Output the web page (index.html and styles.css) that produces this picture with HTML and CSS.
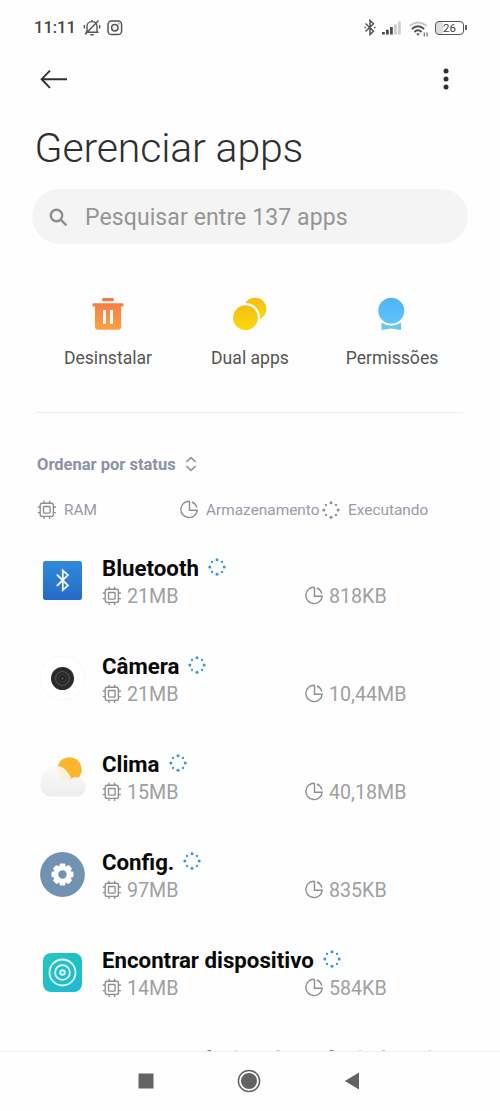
FILE: index.html
```html
<!DOCTYPE html>
<html lang="pt-BR">
<head>
<meta charset="utf-8">
<title>Gerenciar apps</title>
<link rel="stylesheet" href="styles.css">
</head>
<body>
<svg class="defs" width="0" height="0" aria-hidden="true">
  <defs>
    <symbol id="chip" viewBox="0 0 20 20"><g fill="none" stroke="currentColor" stroke-width="1.35"><rect x="3.2" y="3.2" width="13.2" height="13.2" rx="2"/><rect x="6.5" y="6.5" width="6.6" height="6.6" rx=".8"/><path d="M7 3V.8M12.600 3V.8M7 18.900V16.500M12.600 18.900V16.500M3 7H.8M3 12.600H.8M18.900 7H16.500M18.900 12.600H16.500"/></g></symbol>
    <symbol id="pie" viewBox="0 0 20 20"><g fill="none" stroke="currentColor" stroke-width="1.4"><path d="M10.500 1.200A8.200 8.200 0 1 0 18.200 10.200H10.500V1.200M13 2A8.200 8.200 0 0 1 17.800 7.600"/></g></symbol>
    <symbol id="run" viewBox="0 0 18 18"><g fill="currentColor"><circle cx="9" cy="1.8" r="1.5"/><circle cx="16.200" cy="9" r="1.5"/><circle cx="9" cy="16.200" r="1.5"/><circle cx="1.800" cy="9" r="1.5"/><circle cx="14" cy="4" r="1.150"/><circle cx="14" cy="14" r="1.150"/><circle cx="4" cy="14" r="1.150"/><circle cx="4" cy="4" r="1.150"/></g></symbol>
    <linearGradient id="orange" x2="0" y2="1"><stop stop-color="#f4764a"/><stop offset="1" stop-color="#fda13f"/></linearGradient>
    <linearGradient id="yellow" x2="0" y2="1"><stop stop-color="#f6bd12"/><stop offset="1" stop-color="#fbd90c"/></linearGradient>
    <linearGradient id="sky" x2="0" y2="1"><stop stop-color="#4eb5f5"/><stop offset="1" stop-color="#60c4fa"/></linearGradient>
    <linearGradient id="blue" x2="0" y2="1"><stop stop-color="#318ada"/><stop offset="1" stop-color="#246bc6"/></linearGradient>
    <linearGradient id="teal" x2="1" y2="1"><stop stop-color="#25c6bd"/><stop offset="1" stop-color="#1db9d6"/></linearGradient>
    <linearGradient id="cloud" x2="0" y2="1"><stop stop-color="#fafafa"/><stop offset="1" stop-color="#ededee"/></linearGradient>
  </defs>
</svg>
<div class="screen">
  <header class="status">
    <span class="clock">11:11</span>
    <svg class="bell" width="18" height="18" viewBox="0 0 18 18" fill="none" stroke="#555" stroke-width="1.4"><path d="M4 13V7.5C4 4.500 6 2.600 9 2.600S14 4.500 14 7.500V13M2.500 13.300H15.500M7.300 15.800H10.700M1.400 6V9.500M16.600 6V9.500M9 2.600V1M15.500 1.500L2 15.500"/></svg>
    <svg width="16" height="16" viewBox="0 0 16 16" fill="none" stroke="#555" stroke-width="1.5"><rect x="1" y="1" width="13.600" height="13.600" rx="3.600"/><circle cx="7.800" cy="7.800" r="3.200"/><path d="M11.300 3.800h1"/></svg>
    <span class="grow"></span>
    <svg class="bt" width="12" height="17" viewBox="0 0 12 17" fill="none" stroke="#555" stroke-width="1.500"><path d="M1.500 4.500L9.500 12.300 6 15.600V1.400L9.500 4.700 1.500 12.500M.5 8.500h1.600M10 8.500h1.600"/></svg>
    <svg class="signal" width="19" height="14" viewBox="0 0 19 14"><path d="M0 11h2.800v2.500H0zM4 8.800h2.800v4.700H4zM8 6h2.800v7.500H8z" fill="#4d4d4d"/><path d="M12 3.200h2.800v10.300H12zM16 .5h2.800v13H16z" fill="#cfcfcf"/></svg>
    <svg class="wifi" width="20" height="16" viewBox="0 0 20 16" fill="none" stroke-width="1.800"><path d="M.5 5Q9-2 17.500 5" stroke="#c8c8c8"/><path d="M2.800 8Q9 2.400 15.200 8M5.400 11Q9 7.400 12.600 11" stroke="#505050"/><path d="M7.200 12.500h3.600L9 14.700z" fill="#444"/><path d="M15.300 11.500v4M18 11.500v4" stroke="#777" stroke-width="1.300"/></svg>
    <span class="battery">26</span><i class="battery-tip"></i>
  </header>

  <nav class="toolbar">
    <svg width="28" height="20" viewBox="0 0 28 20" fill="none" stroke="#303030" stroke-width="1.900"><path d="M27 10.200H2M10 1.600L1.600 10.200 10 18.800"/></svg>
    <svg width="6" height="22" viewBox="0 0 6 22" fill="#303030"><circle cx="3" cy="3" r="2.500"/><circle cx="3" cy="11" r="2.500"/><circle cx="3" cy="19" r="2.500"/></svg>
  </nav>

  <h1 class="heading">Gerenciar apps</h1>
  <div class="search">
    <svg width="19" height="19" viewBox="0 0 19 19" fill="none" stroke="#8e8e8e" stroke-width="2.400"><circle cx="7.500" cy="7.500" r="5.700"/><path d="M11.700 11.700L17.400 17.400"/></svg>
    <span class="placeholder">Pesquisar entre 137 apps</span>
  </div>

  <section class="actions">
    <div class="action">
      <svg width="34" height="34" viewBox="0 0 34 34"><path fill="url(#orange)" fill-rule="evenodd" d="M12.500 1h9a1.300 1.300 0 0 1 0 3.200h-9a1.300 1.300 0 0 1 0-3.200zM2.500 6.200h29a1 1 0 0 1 1 1v1.200a1 1 0 0 1-1 1h-1.300v20.400a3 3 0 0 1-3 3H7a3 3 0 0 1-3-3V9.400H2.500a1 1 0 0 1-1-1V7.200a1 1 0 0 1 1-1zM12 13v13.700h3V13zM19 13v13.700h3V13z"/></svg>
      <span>Desinstalar</span>
    </div>
    <div class="action">
      <svg width="34" height="34" viewBox="0 0 34 34"><circle cx="22" cy="12" r="11.300" fill="url(#yellow)"/><circle cx="12.500" cy="20.500" r="14.600" fill="#fefefe"/><circle cx="12.500" cy="20.700" r="12.400" fill="url(#yellow)"/></svg>
      <span>Dual apps</span>
    </div>
    <div class="action">
      <svg width="34" height="34" viewBox="0 0 34 34"><path d="M6.500 25.500L16 28.500 26 25.500V33L16 31.500 6.500 33z" fill="#63cbe9"/><circle cx="16.300" cy="13.700" r="14.800" fill="#fefefe"/><circle cx="16.300" cy="13.700" r="13" fill="url(#sky)"/></svg>
      <span>Permissões</span>
    </div>
  </section>

  <div class="sort"><span>Ordenar por status</span><svg width="12" height="16" viewBox="0 0 12 16" fill="none" stroke="#9598aa" stroke-width="1.700"><path d="M1.300 5.800L6 1.600 10.700 5.800M1.300 10.200L6 14.400 10.700 10.200"/></svg></div>
  <div class="legend">
    <span class="key"><svg class="mini"><use href="#chip"/></svg>RAM</span>
    <span class="key"><svg class="mini"><use href="#pie"/></svg>Armazenamento</span>
    <span class="key"><svg class="mini dots"><use href="#run"/></svg>Executando</span>
  </div>

  <main class="apps">
    <article class="app">
      <svg class="logo" viewBox="0 0 46 46"><rect x="3" y="4" width="39" height="39" rx="2.500" fill="url(#blue)"/><path d="M16.800 17.500L28 28.500 22.800 33V13.500L28 18 16.800 29" fill="none" stroke="#eef8ff" stroke-width="1.800"/></svg>
      <div class="info"><h2 class="name">Bluetooth<svg class="running"><use href="#run"/></svg></h2><div class="usage"><span class="stat"><svg class="mini"><use href="#chip"/></svg>21MB</span><span class="stat"><svg class="mini"><use href="#pie"/></svg>818KB</span></div></div>
    </article>
    <article class="app">
      <svg class="logo" viewBox="0 0 46 46"><circle cx="22.500" cy="23" r="22" fill="#fff" stroke="#f7f7f7"/><circle cx="22.500" cy="23.500" r="11.500" fill="#292a2c"/><circle cx="22.500" cy="23.500" r="7" fill="none" stroke="#4d4d4f" stroke-width="1.200"/><circle cx="22.500" cy="23.500" r="3.700" fill="#202123" stroke="#3c3c3c"/><circle cx="22.500" cy="23.500" r=".9" fill="#666"/></svg>
      <div class="info"><h2 class="name">Câmera<svg class="running"><use href="#run"/></svg></h2><div class="usage"><span class="stat"><svg class="mini"><use href="#chip"/></svg>21MB</span><span class="stat"><svg class="mini"><use href="#pie"/></svg>10,44MB</span></div></div>
    </article>
    <article class="app">
      <svg class="logo" viewBox="0 0 46 46"><circle cx="29.500" cy="16.500" r="12.300" fill="#fbb62e"/><path d="M10 43.500a11 11 0 0 1-8.500-16A14 14 0 0 1 27.500 19.500C30 22 31 24 30.500 26A9.800 9.800 0 1 1 33.500 43.500z" fill="url(#cloud)"/><path d="M18 14.500A12.300 12.300 0 0 0 24.500 27.500Q30 27 30.500 24.500 28 16 18 14.500z" fill="#fff0cf" opacity=".7"/></svg>
      <div class="info"><h2 class="name">Clima<svg class="running"><use href="#run"/></svg></h2><div class="usage"><span class="stat"><svg class="mini"><use href="#chip"/></svg>15MB</span><span class="stat"><svg class="mini"><use href="#pie"/></svg>40,18MB</span></div></div>
    </article>
    <article class="app">
      <svg class="logo" viewBox="0 0 46 46"><circle cx="22.500" cy="23.500" r="22.400" fill="#7292b4"/><g transform="translate(22.500 23.500)" fill="#fff"><circle r="8.900"/><rect x="-2.900" y="-11" width="5.800" height="22" rx="1.300"/><rect x="-2.900" y="-11" width="5.800" height="22" rx="1.300" transform="rotate(45)"/><rect x="-2.900" y="-11" width="5.800" height="22" rx="1.300" transform="rotate(90)"/><rect x="-2.900" y="-11" width="5.800" height="22" rx="1.300" transform="rotate(135)"/><circle r="4.200" fill="#7292b4"/></g></svg>
      <div class="info"><h2 class="name">Config.<svg class="running"><use href="#run"/></svg></h2><div class="usage"><span class="stat"><svg class="mini"><use href="#chip"/></svg>97MB</span><span class="stat"><svg class="mini"><use href="#pie"/></svg>835KB</span></div></div>
    </article>
    <article class="app">
      <svg class="logo" viewBox="0 0 46 46"><rect x="3" y="4" width="39" height="39" rx="8" fill="url(#teal)"/><g fill="none" stroke="#e5fbfa" stroke-width="1.800"><circle cx="22.500" cy="23.500" r="13"/><circle cx="22.500" cy="23.500" r="7.400"/></g><circle cx="22.500" cy="23.500" r="3.300" fill="#d8f6f5"/><circle cx="22.500" cy="23.500" r="1.200" fill="#22bfc9"/></svg>
      <div class="info"><h2 class="name">Encontrar dispositivo<svg class="running"><use href="#run"/></svg></h2><div class="usage"><span class="stat"><svg class="mini"><use href="#chip"/></svg>14MB</span><span class="stat"><svg class="mini"><use href="#pie"/></svg>584KB</span></div></div>
    </article>
    <svg class="peek" width="340" height="2" viewBox="0 0 340 2"><path d="M105.500 1h3.500M228 1h3.500" stroke="#555" stroke-width="1.400"/><path d="M174.500 1h3M280 1h3" stroke="#888" stroke-width="1.200"/><path d="M133 1h2.500M257 1h2.500M326.500 1h2.500" stroke="#bbb"/></svg>
  </main>

  <footer class="navbar">
    <svg width="16" height="16"><rect x=".5" y=".5" width="15" height="15" fill="#636363"/></svg>
    <svg width="24" height="24" viewBox="0 0 24 24"><circle cx="12" cy="12" r="10.600" fill="none" stroke="#636363" stroke-width="1.500"/><circle cx="12" cy="12" r="8" fill="#636363"/></svg>
    <svg width="16" height="18"><path d="M15 .5V17.500L.8 9z" fill="#636363"/></svg>
  </footer>
</div>
</body>
</html>
```
FILE: styles.css
```css
* { box-sizing: border-box; }
body { margin: 0; background: #fefefe; font-family: Roboto, "Noto Sans", sans-serif; }
svg { display: block; flex: none; }
.defs { position: absolute; }
.screen { width: 500px; height: 1111px; overflow: hidden; display: flex; flex-direction: column; background: #fefefe; }
.screen > * { flex: none; }

.status { height: 54px; display: flex; align-items: center; padding: 1px 33px 0 34px; }
.clock { font-size: 16.500px; font-weight: 500; color: #444; width: 48.500px; white-space: nowrap; }
.bell { margin-right: 6px; }
.grow { flex: 1; }
.signal { margin-left: 6px; }
.wifi { margin: 2px 6px 0 8px; }
.battery { width: 29px; height: 14px; border: 1.500px solid #555; border-radius: 4px; font-size: 11.500px; line-height: 12px; text-align: center; color: #444; background: linear-gradient(90deg, #ddd 7px, transparent 7px); }
.battery-tip { width: 2px; height: 5px; margin-left: 1px; background: #666; }

.toolbar { height: 50px; display: flex; align-items: center; justify-content: space-between; padding: 0 51px 0 40px; }
.heading { margin: 0; height: 85px; padding: 19px 0 0 34.500px; font-size: 41px; line-height: 50px; font-weight: 300; letter-spacing: -.15px; color: #2f2f2f; white-space: nowrap; }
.search { height: 55px; margin: 0 32px; border-radius: 28px; background: #f4f4f4; display: flex; align-items: center; padding: 2px 0 0 17px; gap: 17px; font-size: 23px; letter-spacing: .1px; color: #959595; }

.actions { height: 169px; margin: 0 37px; padding-top: 53px; border-bottom: 1px solid #ebebeb; display: grid; grid-template-columns: repeat(3, 142px); }
.action { display: flex; flex-direction: column; align-items: center; gap: 15px; font-size: 17.600px; line-height: 24px; color: #555; }

.sort { height: 64px; margin-top: 19px; padding-left: 37px; display: flex; align-items: center; gap: 9px; font-size: 16.500px; font-weight: 700; color: #8d91a8; }
.legend { height: 27px; margin-left: 37px; display: grid; grid-template-columns: 142px 142px 142px; align-items: center; font-size: 15.400px; color: #989ba8; }
.key { display: flex; align-items: center; gap: 7px; white-space: nowrap; }
.mini { width: 20px; height: 20px; color: #8e8e8e; }
.dots { padding: 1px; }

.apps { height: 528px; padding-top: 8px; overflow: hidden; }
.app { height: 98px; display: flex; align-items: center; padding-left: 40px; }
.logo { width: 46px; height: 46px; }
.info { margin-left: 16px; padding-top: 5px; flex: 1; }
.name { margin: 0; display: flex; align-items: center; gap: 9px; font-size: 22.250px; line-height: 27px; font-weight: 700; color: #080808; }
.running { width: 18px; height: 18px; margin-top: -2px; color: #3599cf; }
.usage { display: grid; grid-template-columns: 202px 1fr; font-size: 19.650px; line-height: 28px; color: #a0a0a0; }
.usage .mini { margin-top: -2px; }
.name + .usage { padding-top: 1px; }
.stat { display: flex; align-items: center; gap: 5px; }
.peek { margin: 29px 0 0 102px; }

.navbar { height: 60px; border-top: 1px solid #eee; display: flex; align-items: center; justify-content: space-between; padding: 0 140px 2px 138px; }
```
